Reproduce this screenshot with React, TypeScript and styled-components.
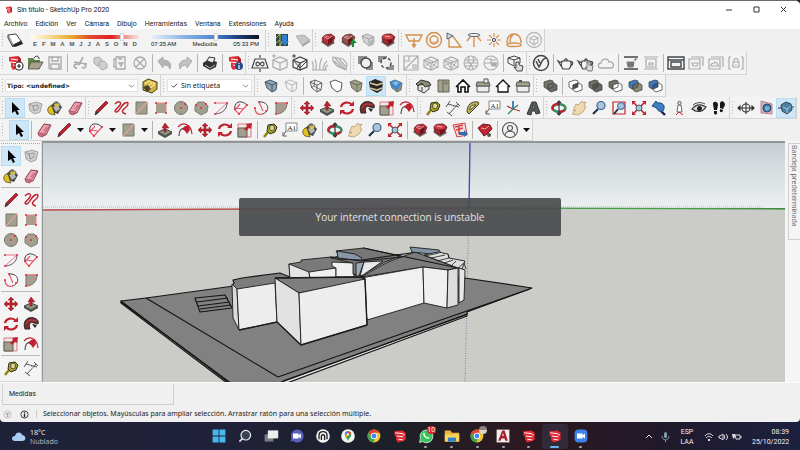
import React from "react";
import styled, { createGlobalStyle, css } from "styled-components";

const GlobalStyle = createGlobalStyle`
  *, *::before, *::after { box-sizing: border-box; }
  body { margin: 0; background: #1d1e2b; font-family: "Open Sans", "Noto Sans", sans-serif; }
  button, input, select { font: inherit; color: inherit; margin: 0; padding: 0; border: 0; background: none; }
`;

const RED = "#bf222e";
const TAUPE = "#a19f8e";
const DARK = "#43474a";
const GREY = "#ababab";
const ORANGE = "#d4924f";

const dot = (x: number, y: number) => <circle key={`${x}-${y}`} cx={x} cy={y} r="1" fill="#e0283a" stroke="none" />;
const cube = (stroke: string, fill: string, width = 1) => (
  <g fill={fill} stroke={stroke} strokeWidth={width} strokeLinejoin="round">
    <path d="M4 6l5-2 7 3-1 7-4 2-5-4z" />
    <path d="M4 6l7 3 5-2M11 9v7" fill="none" />
  </g>
);
const box = (stroke: string) => (
  <path d="M3 7l7-3 7 3v7l-7 3-7-3zM3 7l7 3 7-3M10 10v7" fill="none" stroke={stroke} strokeWidth="1.2" />
);
const solids = (a: string, b: string, overlap: string) => (
  <g stroke={DARK} strokeWidth=".8">
    <path d="M4 6l6-2 3 1v6l-6 2-3-2z" fill={a} />
    <path d="M8 9l6-2 3 2v5l-6 2-3-2z" fill={b} />
    <path d="M8 9l5-2v4l-5 2z" fill={overlap} />
  </g>
);
const sketchup = (
  <>
    <path d="M4 4l9-1 3 3v8l-8 3-2-3V9L4 8z" fill="#e0323a" />
    <path d="M6 6l7 1M6 9l7 1M8 12l5 1" stroke="#fff" strokeWidth="1" fill="none" />
    <path d="M13 3l3 3v8l-3 1z" fill="#a81d27" />
  </>
);
const gem = (fill: string) => (
  <g>
    <path d="M3 12l7 5 7-4-3-3H5z" fill="#6d6b62" />
    <path d="M4 8l3-3 6-1 4 3-2 5-5 3-5-3z" fill={fill} stroke="#5b2023" strokeWidth=".7" />
    <path d="M10 9l5-2-1 5-4 3z" fill="#6f151c" />
    <path d="M6 7l4 2 4-3M7 6l4 1" stroke="#e8a9a9" fill="none" strokeWidth=".9" />
  </g>
);
const teapot = (c: string) => (
  <path d="M6 8h8c2 3 1 6-1 8H7C5 14 5 11 6 8zM6 10L2 8l3 5M14 9c3-2 4 3 0 4M8 8c0-2 4-2 4 0M10 5v1" fill="none" stroke={c} strokeWidth="1.2" />
);

const drawings: Record<string, React.ReactNode> = {
  shadow: (
    <>
      <path d="M6 15l4 2 8-3-2-4z" fill="#222" />
      <path d="M3 5l8-1 5 7-8 4z" fill="#fff" stroke="#444" />
      <path d="M3 5v3l5 9v-2" fill="#ccc" stroke="#444" />
    </>
  ),
  newFile: (
    <>
      {sketchup}
      <circle cx="14" cy="13" r="4" fill="#fff" stroke="#333" strokeWidth="1.2" />
      <path d="M14 11v4M12 13h4" stroke="#222" strokeWidth="1.2" />
    </>
  ),
  open: (
    <>
      <path d="M3 5h5l2 2h5v9H3z" fill="#5f8446" />
      <path d="M6 9h12l-4 7H3z" fill="#a8a28c" stroke="#4b4a42" strokeWidth=".8" />
      <path d="M9 5c2-3 5-2 5 1" stroke="#222" fill="none" />
    </>
  ),
  save: <path d="M4 4h12v12H5l-1-1zM7 4v4h6V4M6 16v-5h8v5" fill="none" stroke={GREY} strokeWidth="1.4" />,
  cut: <path d="M13 4l-4 8M4 9l13 2M8 12a2 2 0 10-1 3M14 11a2 2 0 11-2 3" fill="none" stroke={GREY} strokeWidth="1.7" />,
  copy: (
    <g fill="#cfcfcf" stroke={GREY}>
      <path d="M4 5l5-1 3 3v5l-5 1-3-3z" />
      <path d="M9 9l5-1 3 3v4l-5 2-3-3z" />
    </g>
  ),
  paste: <path d="M6 4h9v12H6zM6 6H4v8h2M9 4v2h3M9 10h4l-2 3z" fill="none" stroke={GREY} strokeWidth="1.3" />,
  remove: <path d="M10 4a6 6 0 100 12 6 6 0 000-12M6 6l8 8M14 6l-8 8" fill="none" stroke={GREY} strokeWidth="1.4" />,
  undo: <path d="M3 8l5-4v3c6 0 9 3 7 9-1-3-3-4-7-4v3z" fill="#b5b5b5" stroke={GREY} />,
  redo: <path d="M17 8l-5-4v3c-6 0-9 3-7 9 1-3 3-4 7-4v3z" fill="#c2c2c2" stroke={GREY} />,
  print: (
    <>
      <path d="M3 10l6-4 8 3-1 5-6 3-7-4z" fill="#333" />
      <path d="M7 8l2-4 6 1-2 5z" fill="#eee" stroke="#333" />
      <path d="M5 12l5 3 5-3" stroke="#bbb" fill="none" />
    </>
  ),
  modelInfo: (
    <>
      {sketchup}
      <circle cx="14" cy="13" r="4" fill="#244c84" />
      <path d="M14 10v1M14 12v4" stroke="#fff" strokeWidth="1.2" />
    </>
  ),
  infinitePlane: (
    <g fill="none" stroke={DARK} strokeWidth="1.2">
      <path d="M2 15l3-9h10l3 9zM10 2v3M10 16v3" />
      <path d="M10 11c-2-3-4-2-4 0s2 3 4 0 4-2 4 0-2 3-4 0" />
    </g>
  ),
  boxLight: (
    <>
      {box(GREY)}
      <path d="M4 1v4M2 3h4" stroke={GREY} />
    </>
  ),
  boxDark: (
    <>
      {box(DARK)}
      <path d="M4 8l6 7M10 10l-3 5M10 15l7-7M4 1v4M2 3h4" stroke={DARK} />
    </>
  ),
  fur: <path d="M3 17c1-4 0-6-1-9M6 17c1-5 0-8-1-11M10 17c-1-6 1-10 2-12M13 17c0-4 1-6 4-9M15 17c0-2 1-4 3-5M2 17h15" fill="none" stroke={GREY} strokeWidth="1.1" />,
  clipper: <path d="M3 4l10 2 4 5-1 6-9-4-4-5zM5 5l10 11M9 6l7 8M4 8l8 7" fill="none" stroke={GREY} strokeWidth="1.2" />,
  sphereSquares: (
    <>
      <path d="M2 3h9v8H2zM10 9h7v8h-7z" fill="#8f8f8f" />
      <circle cx="10" cy="10" r="5" fill="#efefef" stroke={DARK} strokeWidth="1.4" />
    </>
  ),
  squaresDash: (
    <>
      <path d="M2 3h9v6H2zM11 12h7v5h-7z" fill="#8f8f8f" />
      <circle cx="10" cy="10" r="5" fill="#efefef" stroke={DARK} strokeWidth="1.4" strokeDasharray="3 2" />
    </>
  ),
  uvSquare: <path d="M3 3h14v14H3zM3 17L17 3M3 3h5v5H3zM12 12h3v3h-3z" fill="none" stroke={GREY} strokeWidth="1.2" />,
  uvBox: (
    <>
      {box(GREY)}
      <path d="M4 8l6 7M10 10l6 4M4 13l5-3M11 15l5-7M6 6l7 3" stroke={GREY} />
    </>
  ),
  uvSphere: (
    <g fill="none" stroke={GREY} strokeWidth="1.1">
      <circle cx="10" cy="10" r="7" />
      <path d="M4 7h12M3 10h14M4 13h12M8 4l-1 4 3 3-2 5M12 4l1 4-3 3 2 5" />
    </g>
  ),
  uvSphereHalf: (
    <g fill="none" stroke={GREY} strokeWidth="1.1">
      <circle cx="10" cy="10" r="7" />
      <path d="M3 10h14M5 6h5v4M15 7H9" />
      <path d="M10 10h5v3h-4z" fill={GREY} />
    </g>
  ),
  boxHand: (
    <>
      <path d="M2 5l6-2 6 2v5l-6 3-6-3zM2 5l6 2 6-2M8 7v5" fill="none" stroke={DARK} />
      <path d="M10 9v6l-2-1 3 4h5l1-5-4-1V9z" fill="#ddd" stroke={DARK} />
    </>
  ),
  vray: (
    <g fill="none" stroke={DARK} strokeWidth="1.5">
      <circle cx="10" cy="10" r="7.5" />
      <path d="M5 8l3 6c2-2 2-8 7-9M7 6l2 4" />
    </g>
  ),
  teapot: teapot(DARK),
  teapotHand: (
    <>
      {teapot(DARK)}
      <path d="M11 9v6l-2-1 3 4h4l1-5-4-1V9z" fill="#ddd" stroke="#777" />
    </>
  ),
  cloud: <path d="M5 15c-4 0-3-5 0-5 1-5 7-5 8-1 5-1 6 6 2 6z" fill="none" stroke={GREY} strokeWidth="1.3" />,
  teapotBar: (
    <>
      <path d="M3 4h14M3 16h14" stroke={DARK} strokeWidth="1.3" />
      <path d="M6 9h7l-1 5H7zM13 7h2v-2" fill="#777" stroke="#777" />
    </>
  ),
  frameBar: <path d="M3 4h14M3 16h14M5 6h10v8H5zM8 10h4v2H8z" fill="none" stroke={GREY} strokeWidth="1.2" />,
  frame: <path d="M2 4h16v12H2zM2 7h16M5 9h10v5H5z" fill="none" stroke={DARK} strokeWidth="1.4" />,
  framesPot: <path d="M5 4h12v9M3 6h11v10H3zM6 10h6l-1 3H7z" fill="none" stroke={GREY} strokeWidth="1.2" />,
  framesCloud: <path d="M5 4h12v10M3 6h11v10H3zM5 13c0-2 1-3 3-3 2-2 4 0 4 3z" fill="none" stroke={GREY} strokeWidth="1.2" />,
  lock: <path d="M5 4H3v12h2M15 4h2v12h-2M7 9h6v5H7zM8 9V7c0-2 4-2 4 0v2M10 11v1" fill="none" stroke={GREY} strokeWidth="1.2" />,
  map: (
    <>
      <path d="M4 4h12v12H4z" fill="#2b4d40" />
      <path d="M4 8l4-4v12l4-8M4 13l4-3" stroke="#c4ad52" fill="none" />
      <path d="M10 5h5v6h2l-4 5-4-5h1z" fill="#2d80d2" />
    </>
  ),
  terrain: (
    <>
      <path d="M4 6l8-1 6 5-8 5z" fill="#c6c6c6" stroke="#b0b0b0" />
      <path d="M10 15l8-5v2l-8 5z" fill="#a2a2a2" />
    </>
  ),
  gem: gem("#bd2b38"),
  gemUp: (
    <>
      {gem("#8f564a")}
      <path d="M14 17v-4h-2l3-4 4 4h-3v4z" fill="#1a8b35" />
    </>
  ),
  gemGrey: (
    <>
      {cube("#a5a5a5", "#d2d2d2")}
      <path d="M12 11l3-2 2 2-2 4-3 1z" fill="#b5b5b5" />
    </>
  ),
  gemDown: (
    <>
      {gem("#a52834")}
      <ellipse cx="10" cy="7" rx="6" ry="3" fill="#d13f49" stroke="#641218" strokeWidth=".7" />
      <path d="M7 6l5 1" stroke="#f3b9b9" />
    </>
  ),
  rectLight: <path d="M2 5h16l-3 6H5zM10 8v8M8 14l2 3 2-3" fill="none" stroke={ORANGE} strokeWidth="1.4" />,
  sphereLight: (
    <g fill="none" stroke={ORANGE} strokeWidth="1.5">
      <circle cx="10" cy="10" r="7.5" />
      <circle cx="10" cy="10" r="4" />
      <path d="M7 11c2 2 5 2 7-1" strokeWidth="1" />
    </g>
  ),
  spotLight: (
    <>
      <path d="M5 7v10h12L8 5" fill="none" stroke={ORANGE} strokeWidth="1.4" />
      <path d="M3 3l6 3-6 3z" fill="#d8dde0" stroke="#57656c" />
    </>
  ),
  iesLight: (
    <>
      <path d="M7 6l-4 5M13 6l4 5M10 7v10" stroke={ORANGE} strokeWidth="1.4" />
      <ellipse cx="10" cy="5" rx="6" ry="1.5" fill="none" stroke="#57656c" />
    </>
  ),
  omniLight: (
    <>
      <path d="M10 3v4M10 13v4M3 10h4M13 10h4M5 5l3 3M12 12l3 3M15 5l-3 3M8 12l-3 3" stroke={ORANGE} strokeWidth="1.2" />
      <circle cx="10" cy="10" r="1.6" fill="none" stroke="#445" />
    </>
  ),
  domeLight: <path d="M3 13C2 1 18 1 17 13M10 13c3 0 7 0 7 2s-14 2-14 0 3-2 7-2M6 12c0-4 1-6 3-7" fill="none" stroke={ORANGE} strokeWidth="1.5" />,
  meshLight: (
    <g fill="none" stroke="#bababa" strokeWidth="1.3">
      <circle cx="10" cy="10" r="7.5" />
      <path d="M6 8l4-2 4 2v4l-4 3-4-3zM6 8l4 2 4-2M10 10v5" />
    </g>
  ),
  bucket: (
    <>
      <path d="M6 7l6-3 5 5-4 7-6-2z" fill="#45494a" />
      <path d="M8 9l5-2 2 4-4 3z" fill="#b5b7b2" />
      <path d="M9 6l5-1 1 3-5 1z" fill="#d8bd4b" />
      <path d="M5 8C2 10 2 14 5 16l5 1-1-3-2-6z" fill="#e0be24" stroke="#4a4011" strokeWidth=".7" />
      <path d="M8 6c2-4 7-2 7 2" fill="none" stroke="#555" />
    </>
  ),
  tagPaint: (
    <>
      <path d="M3 6l5-3 9 3v7l-5 4-9-3z" fill="#cfae43" stroke="#4f3f15" />
      <path d="M5 8l4-3 6 3M7 10l5-3M9 13l6-5" stroke="#fae792" fill="none" strokeWidth="1.3" />
      <path d="M3 11l5-2 3 4-4 3z" fill="#4b442c" />
    </>
  ),
  eraser: (
    <>
      <path d="M4 13l6-9 7 1-5 10-6 1z" fill="#ef9daa" stroke="#804451" />
      <path d="M4 13l6 1-1 3-4-1zM10 14l6-9M10 11l3-4" fill="#cc7180" stroke="#a55362" strokeWidth=".8" />
    </>
  ),
  cursor: <path d="M7 4v11l3-2 2 4 2-1-2-4h3z" fill="#050505" />,
  component: (
    <>
      <path d="M4 6l7-2 6 2-2 8-5 2-5-3z" fill="#cfcfcf" stroke="#a4a4a4" />
      <path d="M8 8l5-1v4l-4 2zM4 6l4 2 1 5" fill="none" stroke="#999" />
    </>
  ),
  pencil: (
    <>
      <path d="M5 13L15 3l2 2L7 15l-3 2z" fill={RED} stroke="#702128" strokeWidth=".8" />
      <path d="M5 13l2 2-3 2z" fill="#24453b" />
    </>
  ),
  freehand: <path d="M4 6c3-4 7-2 5 1s-7 6-4 7 5-7 9-9 4 2 0 5-3 5 1 6" fill="none" stroke={RED} strokeWidth="1.4" />,
  rect: (
    <>
      <path d="M5 4h11v12H5z" fill={TAUPE} stroke="#777465" />
      <path d="M5 16L16 4" stroke="#dda49b" strokeWidth="1.2" />
    </>
  ),
  rectRot: (
    <>
      <path d="M5 5h10v10H5z" fill={TAUPE} />
      <path d="M5 5h10v10M5 8h4l6 7" stroke="#e6888b" fill="none" />
      {dot(5, 5)}{dot(15, 5)}{dot(15, 15)}{dot(5, 15)}
    </>
  ),
  circle: (
    <>
      <circle cx="10" cy="10" r="6.5" fill={TAUPE} stroke="#77756b" />
      <path d="M10 10l4-4" stroke="#e88" />
      {dot(10, 10)}{dot(14, 6)}
    </>
  ),
  polygon: (
    <>
      <path d="M7 4h6l4 4-1 6-6 3-6-4V8z" fill={TAUPE} stroke="#827f75" />
      <path d="M10 10l4-4" stroke="#e88" />
      {dot(10, 10)}{dot(15, 6)}{dot(5, 7)}
    </>
  ),
  arc: (
    <>
      <path d="M16 5c0 6-4 10-11 11" fill="none" stroke="#555" />
      <path d="M4 5h12L4 16" fill="none" stroke="#e6798a" />
      {dot(4, 5)}{dot(16, 5)}{dot(4, 16)}
    </>
  ),
  arc2: (
    <>
      <path d="M4 12C2 4 10 1 16 7" fill="none" stroke="#444" />
      <path d="M4 12l4 4 8-9M4 10l8 1M4 12l5-6" fill="none" stroke="#e6596a" strokeWidth="1.2" />
      {dot(4, 11)}{dot(8, 16)}{dot(16, 7)}
    </>
  ),
  arc3: (
    <>
      <path d="M8 4c10-1 12 10 3 12" fill="none" stroke="#444" />
      <path d="M8 4l4 9M4 10c0 6 4 7 8 6" fill="none" stroke="#e6596a" strokeWidth="1.2" />
      {dot(8, 4)}{dot(4, 10)}{dot(15, 13)}
    </>
  ),
  pie: (
    <>
      <path d="M5 5h11c0 6-4 11-11 11z" fill={TAUPE} stroke="#77756b" />
      <path d="M5 16L16 5H5" fill="none" stroke="#e6888b" />
      {dot(5, 5)}{dot(16, 5)}{dot(5, 16)}
    </>
  ),
  move: (
    <path d="M10 3l3 3h-2v3h3V7l3 3-3 3v-2h-3v3h2l-3 3-3-3h2v-3H6v2l-3-3 3-3v2h3V6H7z" fill={RED} stroke="#8d1520" strokeWidth=".5" />
  ),
  pushPull: (
    <>
      <path d="M3 12l7-3 7 3-7 4z" fill="#8b927e" stroke="#444" />
      <path d="M3 12v2l7 4 7-4v-2l-7 4z" fill="#47534a" />
      <path d="M9 12V8H7l3-5 4 5h-3v4z" fill={RED} stroke="#7c1720" strokeWidth=".5" />
    </>
  ),
  rotate: (
    <g fill="none" stroke={RED} strokeWidth="2.2">
      <path d="M4 9c1-5 8-6 11-2M16 11c-1 5-8 6-11 2" />
      <path d="M17 3v5h-5zM3 17v-5h5z" fill={RED} stroke="none" />
    </g>
  ),
  followMe: (
    <>
      <path d="M4 15C1 7 7 2 13 4c4 1 5 4 4 6l-4-1c-3-2-6 1-4 6z" fill="#7b2a30" stroke="#27282a" />
      <path d="M5 10c2-4 5-5 10-3" stroke="#c44" fill="none" />
      <path d="M11 10l5 1-2 3z" fill="#222" />
    </>
  ),
  scale: (
    <>
      <path d="M3 4h13v13H3z" fill="#f3e6e6" stroke="#d77880" />
      <path d="M3 8h9v9H3z" fill={TAUPE} stroke="#5f5e55" />
      <path d="M9 9l3-3-1-2 6-1-1 6-2-1-3 3z" fill={RED} />
    </>
  ),
  offset: (
    <>
      <path d="M3 7c5-6 13-3 14 7" fill="none" stroke={RED} strokeWidth="1.2" />
      <path d="M4 16c0-5 2-8 6-8" fill="none" stroke="#444" strokeWidth="1.2" />
      <path d="M7 9l3-3 4-1 1 5-3 4-2-3z" fill={RED} />
    </>
  ),
  tape: (
    <>
      <path d="M4 17l4-5" stroke="#8d8614" strokeWidth="2.6" />
      <path d="M8 5l6-1 3 3-2 5-5 2-3-3z" fill="#aaa62b" stroke="#303018" />
      <ellipse cx="12" cy="8" rx="2.5" ry="3" fill="#ddd69a" stroke="#555220" />
    </>
  ),
  dimension: (
    <g fill="none" stroke="#555" strokeWidth="1">
      <path d="M5 6l11 3M6 16L15 6M3 9l4-6M4 14l5 4M13 4l4 4" />
      <path d="M9 7l3 3" stroke="#aaa" />
    </g>
  ),
  protractor: <path d="M4 14C4 7 8 3 15 4l1 2L6 16zM7 12c0-4 2-5 6-5z" fill="#bab05b" stroke="#474522" fillRule="evenodd" />,
  text: (
    <>
      <path d="M6 3h11v8H6z" fill="#fff" stroke="#888" />
      <path d="M3 16l3-5M3 12v4h4" stroke="#666" fill="none" />
      <text x="7.5" y="9.5" fontSize="7" fontFamily="Liberation Serif, serif" fill="#222">A1</text>
    </>
  ),
  axes: (
    <>
      <path d="M10 3v8" stroke="#2b63b8" strokeWidth="1.6" />
      <path d="M10 11l7 2M4 8l6 3" stroke="#b63b42" strokeWidth="1.3" />
      <path d="M10 11l-5 5M10 11l5-4" stroke="#2e8c5b" strokeWidth="1.3" />
    </>
  ),
  text3d: <path d="M4 16L9 4h4l4 11-4 1-1-3H9l-1 4zM10 7l-1 3h3z" fill="#565a58" stroke="#353837" fillRule="evenodd" />,
  orbit: (
    <>
      <ellipse cx="10" cy="10" rx="6.5" ry="3.7" fill="none" stroke="#378d62" strokeWidth="2.5" />
      <path d="M4 12C2 7 6 6 10 6M10 14c3 0 5-1 6-2" fill="none" stroke={RED} strokeWidth="2.3" />
      <path d="M10 3v14M8 5l2-2 2 2M8 15l2 2 2-2" fill="none" stroke="#333" strokeWidth="1.2" />
    </>
  ),
  hand: <path d="M4 13l3-7 2 1 4-4 1 2 3-1-2 4 2 1-3 5-5 3-6-1 4-4z" fill="#efd9b0" stroke="#b59a6e" strokeWidth=".8" />,
  zoom: (
    <>
      <path d="M4 16l5-5" stroke="#22344c" strokeWidth="2.2" />
      <circle cx="12" cy="7.5" r="4" fill="#a9c3dd" stroke="#3f628c" strokeWidth="1.2" />
    </>
  ),
  zoomWindow: (
    <>
      <path d="M4 4h12v12H4z" fill="none" stroke={RED} strokeWidth="1.2" />
      <path d="M5 16l4-5" stroke="#22344c" strokeWidth="2" />
      <circle cx="12" cy="8" r="3.5" fill="#a9c3dd" stroke="#3f628c" />
    </>
  ),
  zoomExtents: (
    <>
      <path d="M4 4l4 4M16 4l-4 4M4 16l4-4M16 16l-4-4" stroke={RED} strokeWidth="1.6" />
      <path d="M3 3h4L3 7zM17 3h-4l4 4zM3 17h4l-4-4zM17 17h-4l4-4z" fill={RED} />
      <circle cx="10" cy="10" r="3" fill="#a5c5d0" stroke="#3d5e6d" />
    </>
  ),
  previous: (
    <>
      <path d="M12 13l4 4" stroke="#16263c" strokeWidth="2.4" />
      <path d="M3 8l4-5 1 2c6-1 9 3 6 8-3 1-6 0-6-3z" fill="#3f80c4" stroke="#204a78" />
    </>
  ),
  camera: (
    <>
      <path d="M9 7h3l1 7h-5z" fill="#fff" stroke="#666" />
      <circle cx="10.5" cy="5" r="1.7" fill="#ddd" stroke="#666" />
      <path d="M7 17l3-3 4 3" fill="none" stroke={RED} />
    </>
  ),
  eye: (
    <>
      <path d="M3 11c4-5 9-5 14-2-3 5-9 6-14 2z" fill="#ddd" stroke="#333" strokeWidth="1.2" />
      <circle cx="10.5" cy="10.5" r="2.5" fill="#222" />
      <path d="M4 7c4-3 8-3 12-1" fill="none" stroke="#444" />
    </>
  ),
  walk: <path d="M4 6c0-3 5-3 5 1l-1 5H5zM5 13h3v2c0 2-3 2-3 0zM11 5c1-3 5-2 5 2l-2 4-3-1zM11 11l3 1c0 3-4 3-3 0z" fill="#181818" />,
  section: (
    <g fill="none" stroke="#333" strokeWidth="1.1">
      <circle cx="10" cy="10" r="4" />
      <path d="M2 10h16M10 4v12M2 10l2-2v4zM18 10l-2-2v4z" />
    </g>
  ),
  sectionPlane: (
    <>
      <path d="M5 3l11 3v10L5 15z" fill="#d6adbb" stroke="#b087a0" />
      <circle cx="11" cy="10" r="4" fill="#3c78a8" stroke="#264b6d" />
      <path d="M9 9l3-1 2 2-2 3-3-1z" fill="#77aed4" />
    </>
  ),
  sectionCut: (
    <>
      <path d="M5 7l5-3 5 2 1 6-5 4-5-3z" fill="#4d80a8" stroke="#3a444c" />
      <path d="M7 9l4 2 4-3M11 11v4" stroke="#a5cbe4" fill="none" />
      <path d="M2 10h3M16 9h2" stroke="#333" />
    </>
  ),
  cubeBlue: cube("#4a5963", "#8ea4b6"),
  cubeGhost: cube("#a5a5a5", "#f3f3f3", 0.8),
  cubeWire: (
    <>
      {cube("#555", "none", 0.9)}
      <path d="M9 4l-1 6-3 2M8 10l7 4" stroke="#555" strokeWidth=".8" fill="none" />
    </>
  ),
  cubeHidden: <path d="M4 6l5-2 7 3-1 7-4 2-5-4z" fill="#fff" stroke="#555" />,
  cubeShaded: cube("#6e6d60", "#a19f89"),
  cubeTextured: (
    <>
      <path d="M3 6l6-3 8 3-1 8-5 3-7-4z" fill="#28241f" />
      <path d="M4 7l7 2 6-2M4 12l7 2 5-2" stroke="#cdbd9b" strokeWidth="1.8" fill="none" />
    </>
  ),
  cubeMono: (
    <>
      {cube("#66786f", "#918f7c")}
      <path d="M4 6l5-2 7 3-5 7-6-4z" fill="#3c86cf" />
      <path d="M6 7l4-2 3 2-3 3z" fill="#86b8e4" />
    </>
  ),
  iso: (
    <>
      <path d="M5 9v5l6 3 5-4V8z" fill="#e8e6de" stroke="#333" />
      <path d="M3 8l5-4 8 2 2 3-6 2-3-4-4 3z" fill="#8c8b77" stroke="#333" />
      <path d="M9 15v-4" stroke="#333" />
    </>
  ),
  top: (
    <>
      <path d="M5 4h11v12H5z" fill="#a3a18a" stroke="#66655a" />
      <path d="M10 4v12M12 6h2v2h-2z" stroke="#66655a" fill="#eee" />
    </>
  ),
  front: <path d="M3 11l7-7 7 7M5 10v6h3v-5h4v5h3v-6" fill="#fff" stroke="#111" strokeWidth="1.6" />,
  right: (
    <>
      <path d="M4 10h12v6H4z" fill="#eee" stroke="#555" />
      <path d="M3 10l1-4h12l1 4z" fill="#a3a18a" stroke="#555" />
      <path d="M11 3h4v4h-4z" fill="#eee" stroke="#555" />
    </>
  ),
  back: <path d="M3 11l7-7 7 7M5 10v6h10v-6" fill="#fff" stroke="#111" strokeWidth="1.3" />,
  left: (
    <>
      <path d="M4 10h12v6H4z" fill="#eee" stroke="#555" />
      <path d="M3 10l1-4h12l1 4z" fill="#a3a18a" stroke="#555" />
      <path d="M6 5h3" stroke="#555" strokeWidth="2" />
    </>
  ),
  outerShell: solids("#777568", "#6b695d", "#716f62"),
  intersect: solids("#fff", "#fff", "#4e4e48"),
  union: solids("#716f62", "#67655b", "#55544c"),
  subtract: solids("#716f62", "#fff", "#fff"),
  trim: solids("#3c79bb", "#8e8a76", "#726f60"),
  split: solids("#3c79bb", "#fff", "#285a92"),
  layout: (
    <>
      <path d="M3 5l12-2 2 12-10 2z" fill="#f0dddd" stroke="#d73e47" />
      <path d="M5 7l8-2M6 10l7-2M9 7v7" stroke="#d73e47" strokeWidth="1.6" />
      <path d="M9 12h5v-2l4 4-4 3v-2H9z" fill="#2a70b8" />
    </>
  ),
  gemGear: (
    <>
      <path d="M3 8l5-4 7 1 2 4-5 5-3 2z" fill="#bd2430" stroke="#701820" />
      <path d="M6 8l4 1 4-3" stroke="#eeaaaa" fill="none" />
      <circle cx="14" cy="15" r="2" fill="#555" />
    </>
  ),
  user: (
    <g fill="none" stroke="#555" strokeWidth="1.1">
      <circle cx="10" cy="10" r="7.5" />
      <circle cx="10" cy="8" r="2.5" />
      <path d="M5 15c1-5 9-5 10 0" />
    </g>
  ),
  sketchup,
};

const Glyph = styled.svg<{ $size?: number }>`
  display: block;
  flex: none;
  width: ${(p) => p.$size ?? 20}px;
  height: ${(p) => p.$size ?? 20}px;
`;

const Icon = ({ name, size }: { name: string; size?: number }) => (
  <Glyph viewBox="0 0 20 20" $size={size} aria-hidden="true">{drawings[name]}</Glyph>
);

const Page = styled.div`
  display: flex;
  flex-direction: column;
  min-height: 100vh;
  color: #222;
  font-size: 7px;
  line-height: 10px;
`;
const AppWindow = styled.div`
  flex: 1;
  display: flex;
  flex-direction: column;
  background: #f0f0f0;
  border-top: 1px solid #6e6a6d;
  border-radius: 0 5px 4px 4px;
  overflow: hidden;
`;
const TitleBar = styled.header`
  display: flex;
  align-items: center;
  height: 17px;
  padding-left: 4px;
  gap: 3px;
  background: #fff;
`;
const Title = styled.h1`
  flex: 1;
  margin: 0;
  font: 400 7px/10px Roboto, sans-serif;
`;
const CaptionButtons = styled.div`
  display: flex;
  padding-right: 3px;
`;
const CaptionButton = styled.button`
  display: grid;
  place-items: center;
  width: 27px;
  height: 16px;
`;
const MenuBar = styled.nav`
  display: flex;
  gap: 8px;
  height: 11px;
  padding-left: 4px;
  background: #fff;
  font-family: Roboto, sans-serif;
`;
const MenuButton = styled.button`
  line-height: 10px;
`;
const ToolRow = styled.div<{ $height: number }>`
  display: flex;
  height: ${(p) => p.$height}px;
`;
const Bar = styled.div<{ $boundary?: number }>`
  display: flex;
  align-items: center;
  border-right: 1px solid #d2d2d2;
  border-bottom: 1px solid #d6d6d6;
  background: #f3f3f3;
  &::before {
    content: "";
    align-self: stretch;
    width: ${(p) => (p.$boundary ?? 7) - 1}px;
    margin: 3px 0;
    background: radial-gradient(circle, #b5b5b5 0 1px, transparent 1px) 1px 0 / 3px 3px repeat-y;
  }
`;
const active = css`
  background: #cde6f8;
  box-shadow: inset 0 0 0 1px #b9dcf5;
`;
const ToolButton = styled.button<{ $active?: boolean }>`
  display: grid;
  place-items: center;
  flex: none;
  width: 20px;
  height: 20px;
  ${(p) => p.$active && active}
`;
const ArrowButton = styled.button`
  display: grid;
  place-items: center;
  width: 12px;
  height: 16px;
`;
const Separator = styled.span`
  flex: none;
  width: 1px;
  height: 18px;
  margin: 0 2px;
  background: #b4b4b4;
`;
const Scale = styled.div`
  display: flex;
  flex-direction: column;
  width: 108px;
  margin: 0 6px;
`;
const ScaleLabels = styled.div`
  display: flex;
  justify-content: space-between;
  padding: 0 2px;
  font: 700 6px/7px "Liberation Sans", Arial, sans-serif;
  color: #555;
`;
const TimeLabels = styled(ScaleLabels)`
  padding: 0;
  font-weight: 400;
  color: #111;
`;
const Slider = styled.input<{ $track: string }>`
  appearance: none;
  display: block;
  width: 100%;
  height: 8px;
  background: linear-gradient(${(p) => p.$track}) center / 100% 4px no-repeat;
  &::-webkit-slider-thumb {
    appearance: none;
    width: 4px;
    height: 8px;
    border: 1px solid #d5d5d5;
    background: #fff;
  }
`;
const SelectBox = styled.div<{ $width: number }>`
  display: grid;
  grid-template-columns: 1fr 9px;
  align-items: center;
  width: ${(p) => p.$width}px;
  height: 13px;
  margin-right: 2px;
  background: #fff;
  border: 1px solid #e2e2e2;
`;
const Select = styled.select<{ $bold?: boolean }>`
  appearance: none;
  grid-area: 1 / 1 / 2 / 3;
  height: 11px;
  padding: 0 12px 0 ${(p) => (p.$bold ? 1 : 13)}px;
  font: ${(p) => (p.$bold ? "700 6px/11px 'DejaVu Sans'" : "400 7px/11px 'Noto Sans'")}, sans-serif;
`;
const SelectMark = styled.svg<{ $start?: boolean }>`
  grid-area: ${(p) => (p.$start ? "1 / 1" : "1 / 2")};
  width: 7px;
  height: 7px;
  margin-left: ${(p) => (p.$start ? 3 : 0)}px;
  pointer-events: none;
`;
const Workspace = styled.main`
  position: relative;
  flex: 1;
  display: flex;
  min-height: 240px;
`;
const Palette = styled.aside`
  flex: none;
  width: 42px;
  padding: 2px 1px 0;
  background: #f4f4f4;
  border-right: 1px solid #e1e1e1;
  border-bottom: 1px solid #d6d6d6;
`;
const PaletteGroup = styled.div`
  display: grid;
  grid-template-columns: 20px 20px;
  padding: 2px 0 1px;
  border-top: 1px solid #b9b9b9;
  &:first-child { border-top: 1px dotted #aaa; }
`;
const Viewport = styled.section`
  flex: 1;
  min-width: 0;
  display: flex;
  border-top: 2px solid #929597;
  border-left: 1px solid #929597;
  background: #cbccc8;
`;
const Scene = styled.svg`
  flex: 1;
  width: 100%;
  height: 100%;
  min-width: 0;
`;
const Tray = styled.aside`
  flex: none;
  width: 15px;
  padding: 2px 0 0 3px;
  background: #f5f5f5;
`;
const TrayTab = styled.button`
  width: 12px;
  height: 97px;
  padding: 1px 2px 2px 0;
  border: 1px solid #cfcfcf;
  border-right: 0;
  writing-mode: vertical-rl;
  text-align: left;
  color: #666;
  font: 400 7px/8px "Open Sans", sans-serif;
`;
const Toast = styled.div`
  position: absolute;
  top: 57px;
  left: 50%;
  width: 322px;
  transform: translateX(-50%);
  padding: 12px 0;
  border-radius: 2px;
  background: rgba(74, 75, 77, 0.92);
  color: #e4e4e4;
  font: 400 10px/14px "Open Sans", sans-serif;
  text-align: center;
`;
const MeasureRow = styled.div`
  display: flex;
  height: 25px;
  padding: 1px 0 2px 2px;
  border-top: 1px solid #fafafa;
`;
const MeasureBox = styled.div`
  display: flex;
  align-items: center;
  gap: 6px;
  width: 172px;
  padding-left: 6px;
  border: 1px solid #cfcfcf;
  border-left: 1px dotted #bbb;
  border-top: 0;
  font-family: Roboto, sans-serif;
`;
const MeasureInput = styled.input`
  flex: 1;
  min-width: 0;
`;
const StatusBar = styled.footer`
  display: flex;
  align-items: center;
  gap: 8px;
  height: 15px;
  padding: 0 0 1px 3px;
`;
const StatusText = styled.span`
  margin-left: -1px;
  padding-left: 6px;
  border-left: 1px solid #ccc;
  font-family: "Noto Sans", sans-serif;
  line-height: 8px;
`;
const Taskbar = styled.footer`
  display: grid;
  grid-template-columns: 1fr 387px 1fr;
  align-items: center;
  height: 29px;
  background: linear-gradient(90deg, #1f2138, #20213a 28%, #1c2028 48%, #2d1820 66%, #21192a 82%, #1c2040);
  color: #f0f0f4;
`;
const Weather = styled.button`
  display: flex;
  align-items: center;
  gap: 4px;
  padding-left: 11px;
  text-align: left;
  line-height: 9px;
`;
const WeatherState = styled.span`
  display: block;
  color: #b9bac8;
`;
const Apps = styled.div`
  display: grid;
  grid-template-columns: repeat(15, 1fr);
`;
const AppButton = styled.button<{ $state?: "open" | "current" }>`
  display: flex;
  flex-direction: column;
  align-items: center;
  gap: 2px;
  height: 25px;
  padding-top: 4px;
  border-radius: 3px;
  background: ${(p) => (p.$state === "current" ? "#322a38" : "none")};
  &::after {
    content: "";
    width: ${(p) => (p.$state === "current" ? 9 : p.$state ? 3 : 0)}px;
    height: 2px;
    border-radius: 1px;
    background: ${(p) => (p.$state === "current" ? "#65b5e8" : "#a3a1a8")};
  }
`;
const BadgeHost = styled.span`
  position: relative;
  display: block;
`;
const Badge = styled.span`
  position: absolute;
  top: -2px;
  right: -2px;
  width: 9px;
  border-radius: 5px;
  background: #d92632;
  font: 400 7px/8px Roboto, sans-serif;
  text-align: center;
`;
const Avatar = styled.span`
  position: absolute;
  top: -2px;
  right: -2px;
  width: 8px;
  height: 8px;
  border-radius: 50%;
  background: linear-gradient(#8c8480 50%, #ddd5cc 50%);
`;
const SystemTray = styled.div`
  display: flex;
  align-items: center;
  justify-content: flex-end;
  gap: 5px;
  padding-right: 11px;
`;
const TrayText = styled.button<{ $align: "center" | "right"; $width: number }>`
  width: ${(p) => p.$width}px;
  text-align: ${(p) => p.$align};
  font: 400 7px/10px Roboto, sans-serif;
`;
const TrayIcons = styled.button<{ $gap: number }>`
  display: flex;
  gap: ${(p) => p.$gap}px;
  margin: 0 5px;
`;

/* Entries: "icon|Label", "icon|Label|on", "-" for a separator and "v" for a drop arrow. */
const Tools = ({ items }: { items: string[] }) => (
  <>
    {items.map((item, i) => {
      if (item === "-") return <Separator key={i} />;
      if (item === "v")
        return (
          <ArrowButton key={i} aria-label="Más opciones">
            <svg width="7" height="4" viewBox="0 0 7 4"><path d="M0 0h7L3.5 4z" fill="#111" /></svg>
          </ArrowButton>
        );
      const [icon, label, on] = item.split("|");
      return (
        <ToolButton key={i} aria-label={label} aria-pressed={on === "on"} $active={on === "on"}>
          <Icon name={icon} />
        </ToolButton>
      );
    })}
  </>
);

const Chevron = () => (
  <SelectMark viewBox="0 0 8 8" aria-hidden="true"><path d="M1 3l3 3 3-3" fill="none" stroke="#777" /></SelectMark>
);

const principal = ["cursor|Seleccionar|on", "component|Crear componente", "bucket|Pintar", "eraser|Borrar"];
const drawing = ["pencil|Línea", "freehand|A mano alzada", "rect|Rectángulo", "rectRot|Rectángulo girado", "circle|Círculo", "polygon|Polígono", "arc|Arco", "arc2|Arco de 2 puntos", "arc3|Arco de 3 puntos", "pie|Sector"];
const editingBar = ["move|Mover", "pushPull|Empujar/tirar", "rotate|Rotar", "followMe|Sígueme", "scale|Escala", "offset|Equidistancia"];

const Building = () => (
  <Scene viewBox="43 143 742 239" preserveAspectRatio="xMinYMin slice" role="img" aria-label="Modelo 3D">
    <defs>
      <linearGradient id="sky" x1="0" y1="0" x2="0" y2="1">
        <stop offset="0" stopColor="#c7ced2" />
        <stop offset=".75" stopColor="#e3e8ea" />
        <stop offset="1" stopColor="#eceff0" />
      </linearGradient>
    </defs>
    <rect x="43" y="142" width="3000" height="67" fill="url(#sky)" />
    <rect x="43" y="209" width="3000" height="1000" fill="#cbccc8" />
    <path d="M43 207h372M469 207h293" stroke="#a5a2a2" strokeWidth=".8" strokeDasharray="1 1" />
    <path d="M43 210l426-2" stroke="#bc4e50" strokeWidth="1.3" />
    <path d="M469 208l316 1h2000" stroke="#45a145" strokeWidth="1.3" />
    <path d="M470 142l-1 66" stroke="#3f45b5" strokeWidth="1.3" />
    <path d="M469 208l-4 174" stroke="#7f82a8" strokeDasharray="1 1.5" />
    <g stroke="#161616" strokeWidth="1.2" strokeLinejoin="round">
      <path d="M121 301v2l106 80h4zM467 313v3l-180 67h-9v-5z" fill="#e6e6e6" />
      <path d="M121 301l25-3 88-12 231-8 67 10-65 24v2l-188 69h-50z" fill="#818181" />
      <path d="M146 298l132 79 252-88M466 315l-183 66M121 302l111 82" fill="none" />
      <path d="M195 298l30-3 7 13-32 4zM197 302l31-4M198 306l32-4M200 309l31-4" fill="none" />
      <path d="M233 280l9-2 38-5 10 4h30l-45 7-38 6-5-4 2-3z" fill="#7d7d7d" />
    </g>
    <g stroke="#1c1c1c" strokeWidth=".9" strokeLinejoin="round">
      <path d="M232 284l5 5 2 41-6-12z" fill="#dadada" />
      <path d="M237 289l38-6 2 39-38 8z" fill="#ededed" />
      <path d="M289 264l12-2v-2l30-3 24 3v17h-65z" fill="#7a7a7a" />
      <path d="M289 264l20 8 1 8h-20z" fill="#e4e4e4" />
      <path d="M309 272l27-4v10h-26z" fill="#f0f0f0" />
      <path d="M332 262l22 1v14h-18v-9l-4-2z" fill="#f0f0f0" />
      <path d="M336 251l28-3 36 8-15 6-24 14-8-2v-11l-22-5 8-2z" fill="#777" />
      <path d="M337 251l18 3 7 4-1 2-23-1z" fill="#8797a8" />
      <path d="M356 263l8-1-5 14h-3z" fill="#9aa8b7" />
      <path d="M364 262l19-1-20 14-3 1z" fill="#e6e9ec" />
      <path d="M361 277l27-15 27-10 43 16-10 2-25-3z" fill="#7c7c7c" />
      <path d="M330 257l32 4 40-4M363 248l95 20M362 260l62-9" fill="none" strokeWidth="1.2" />
      <path d="M410 247l29 3 3 5-30-3z" fill="#8495a7" />
      <path d="M424 255l14-3 10 2 1 4 16 3-3 8-4-1z" fill="#dedede" />
      <g fill="none" strokeWidth=".8">
        <path d="M425 256l14-3M431 258l14-3M437 261l12-3M444 263l9-3M451 266l5-5M458 268l6-5 2 6M448 254l1 4" />
      </g>
      <path d="M361 278l62-11 1 36-57 17z" fill="#f1f1f1" />
      <path d="M423 267l25 3-1 38-23-5z" fill="#f0f0f0" />
      <path d="M448 270l10-2v37l-11 3z" fill="#ddd" />
      <path d="M459 268l6 2-1 30-5 3z" fill="#e8e8e8" />
      <path d="M275 278l89-1 1 3-66 13z" fill="#7e7e7e" />
      <path d="M275 278l24 15 2 52-24-23z" fill="#e2e2e2" />
      <path d="M299 293l66-14 2 46-66 20z" fill="#ededed" />
      <path d="M275 278l86-1 4 2 2 46-66 20-24-23-38 8" fill="none" strokeWidth="1.4" />
    </g>
  </Scene>
);

const appArt: Record<string, React.ReactNode> = {
  windows: <path d="M2 2h7.500v7.500H2zM10.500 2H18v7.500h-7.500zM2 10.500h7.500V18H2zM10.500 10.500H18V18h-7.500z" fill="#46b8ec" />,
  search: <><path d="M8 12l-5 5" stroke="#ddd" strokeWidth="2" /><circle cx="11" cy="9" r="6" fill="#3a4355" stroke="#eee" strokeWidth="1.5" /></>,
  tasks: <><path d="M2 8h11v9H2z" fill="#777b82" /><path d="M6 3h13v10H6z" fill="#eee" /></>,
  chat: <><path d="M10 2a8 8 0 11-5 14l-3 1 1-4A8 8 0 0110 2z" fill="#5b5fc0" /><path d="M5 7h7v6H5zM12 9l3-2v6l-3-2z" fill="#fff" /></>,
  arch: <><circle cx="10" cy="10" r="8.5" fill="#f4f4f4" /><path d="M5 14V9c0-6 10-6 10 0v5M8 15v-5c0-2 4-2 4 0v5" fill="none" stroke="#222" strokeWidth="1.7" /></>,
  maps: <><circle cx="10" cy="10" r="8.5" fill="#f5f5f5" /><path d="M10 17c0-4-4-5-4-9a4 4 0 018 0c0 4-4 5-4 9z" fill="#31a653" /><path d="M6 8c0-3 2-4 4-4v4z" fill="#4285f4" /><path d="M10 4c2 0 4 1 4 4h-4z" fill="#ea4335" /><path d="M6 8h4l-2 4z" fill="#fbbc04" /><circle cx="10" cy="8" r="1.4" fill="#fff" /></>,
  chrome: <><circle cx="10" cy="10" r="8" fill="#f5c32c" /><path d="M3 6a8 8 0 0114 0h-7l-3 5z" fill="#de4436" /><path d="M3 6l4 6 4 2-2 4A8 8 0 013 6z" fill="#36a453" /><circle cx="10" cy="10" r="4" fill="#fff" /><circle cx="10" cy="10" r="3" fill="#4285f4" /></>,
  sketch: <><path d="M3 4l10-1 4 3v9l-9 3-3-3v-4L3 9z" fill="#e22832" /><path d="M4 6l9 1 3 2M6 10l8 1M8 14l6 1" stroke="#fff" strokeWidth="1.2" fill="none" /></>,
  whatsapp: <><path d="M2 18l1-5a8 8 0 113 4z" fill="#36c45b" stroke="#eee" /><path d="M7 6c-2 3 3 9 7 7l-1-2-2 1-3-4 1-1z" fill="#fff" /></>,
  folder: <><path d="M1 3h7l2 3h9v11H1z" fill="#e8b93d" /><path d="M1 8h18v9H1z" fill="#f7d35d" /><path d="M5 12h10v5H5z" fill="#2f80d0" /></>,
  autocad: <><path d="M2 2h16v16H2z" fill="#f2eeee" /><path d="M4 16L9 3h3l4 13h-3l-1-3H8l-1 3zM9 10h2l-1-4z" fill="#a51f2c" fillRule="evenodd" /></>,
  zoomApp: <><rect x="2" y="2" width="16" height="16" rx="5" fill="#3f82ee" /><path d="M5 7h7v6H5zM12 9l3-2v6l-3-2z" fill="#fff" /></>,
};

const apps: { glyph: string; label: string; state?: "open" | "current"; badge?: string; avatar?: boolean }[] = [
  { glyph: "windows", label: "Inicio" },
  { glyph: "search", label: "Buscar" },
  { glyph: "tasks", label: "Vista de tareas" },
  { glyph: "chat", label: "Chat" },
  { glyph: "arch", label: "Biblioteca" },
  { glyph: "maps", label: "Mapas" },
  { glyph: "chrome", label: "Chrome" },
  { glyph: "sketch", label: "SketchUp" },
  { glyph: "whatsapp", label: "WhatsApp", state: "open", badge: "10" },
  { glyph: "folder", label: "Explorador", state: "open" },
  { glyph: "chrome", label: "Chrome, perfil", state: "open", avatar: true },
  { glyph: "autocad", label: "AutoCAD", state: "open" },
  { glyph: "sketch", label: "SketchUp, modelo", state: "open" },
  { glyph: "sketch", label: "SketchUp, Sin título", state: "current" },
  { glyph: "zoomApp", label: "Zoom", state: "open" },
];

export default function App() {
  return (
    <Page>
      <GlobalStyle />
      <AppWindow>
        <TitleBar>
          <Icon name="sketchup" size={10} />
          <Title>Sin título - SketchUp Pro 2020</Title>
          <CaptionButtons>
            <CaptionButton aria-label="Minimizar"><svg width="7" height="7"><path d="M0 4h6" stroke="#333" /></svg></CaptionButton>
            <CaptionButton aria-label="Maximizar"><svg width="7" height="7"><path d="M1 1h5v5H1z" fill="none" stroke="#333" /></svg></CaptionButton>
            <CaptionButton aria-label="Cerrar"><svg width="7" height="7"><path d="M1 1l5 5M6 1L1 6" stroke="#333" /></svg></CaptionButton>
          </CaptionButtons>
        </TitleBar>
        <MenuBar aria-label="Menú">
          {["Archivo", "Edición", "Ver", "Cámara", "Dibujo", "Herramientas", "Ventana", "Extensiones", "Ayuda"].map((m) => (
            <MenuButton key={m}>{m}</MenuButton>
          ))}
        </MenuBar>

        <ToolRow $height={23}>
          <Bar $boundary={6}>
            <Tools items={["shadow|Sombras"]} />
            <Scale>
              <Slider type="range" aria-label="Fecha" defaultValue={86} $track="90deg, #fffdf0, #f6d98a 18%, #e9a72a 38%, #dd4a2c 55%, #e02020 75%, #f08e86 86%, #f4e6e4" />
              <ScaleLabels>{[..."EFMAMJJASOND"].map((m, i) => <span key={i}>{m}</span>)}</ScaleLabels>
            </Scale>
            <Scale>
              <Slider type="range" aria-label="Hora" defaultValue={61} $track="90deg, #e8f0fa, #8db4e2 30%, #4f86cf 58%, #2f5cae 70%, #172b57 88%, #0b1020" />
              <TimeLabels><span>07:35 AM</span><span>Mediodía</span><span>05:33 PM</span></TimeLabels>
            </Scale>
          </Bar>
          <Bar><Tools items={["map|Añadir ubicación", "terrain|Mostrar terreno"]} /></Bar>
          <Bar $boundary={6}><Tools items={["gem|3D Warehouse", "gemUp|Compartir modelo", "gemGrey|Compartir componente", "gemDown|Extension Warehouse"]} /></Bar>
          <Bar $boundary={6}><Tools items={["rectLight|Luz rectangular", "sphereLight|Luz esférica", "spotLight|Foco", "iesLight|Luz IES", "omniLight|Luz omni", "domeLight|Luz de cúpula", "meshLight|Luz de malla"]} /></Bar>
        </ToolRow>

        <ToolRow $height={23}>
          <Bar $boundary={6}>
            <Tools items={["newFile|Nuevo", "open|Abrir", "save|Guardar", "-", "cut|Cortar", "copy|Copiar", "paste|Pegar", "remove|Eliminar", "-", "undo|Deshacer", "redo|Rehacer", "-", "print|Imprimir", "-", "modelInfo|Información del modelo"]} />
          </Bar>
          <Bar $boundary={5}><Tools items={["infinitePlane|Plano infinito", "boxLight|Exportar proxy", "boxDark|Importar proxy", "fur|Pelo", "clipper|Recortador"]} /></Bar>
          <Bar $boundary={6}>
            <Tools items={["sphereSquares|Proyección esférica", "squaresDash|Proyección", "-", "uvSquare|UV plano", "uvBox|UV triplanar", "uvBox|UV ajustado", "uvSphere|UV esfera", "uvSphereHalf|UV media esfera", "-", "boxHand|Seleccionar objeto"]} />
          </Bar>
          <Bar $boundary={5}>
            <Tools items={["vray|Editor de recursos", "-", "teapot|Render", "teapotHand|Render interactivo", "cloud|Render en la nube", "-", "teapotBar|Render en vista", "frameBar|Región", "-", "frame|Búfer de imagen", "framesPot|Render por lotes", "framesCloud|Lotes en la nube", "lock|Bloquear cámara"]} />
          </Bar>
        </ToolRow>

        <ToolRow $height={22}>
          <Bar $boundary={6}>
            <SelectBox $width={133}>
              <Select aria-label="Tipo" $bold><option>Tipo: &lt;undefined&gt;</option></Select>
              <Chevron />
            </SelectBox>
            <Tools items={["tagPaint|Clasificador"]} />
          </Bar>
          <Bar>
            <SelectBox $width={85}>
              <Select aria-label="Etiqueta"><option>Sin etiqueta</option></Select>
              <SelectMark $start viewBox="0 0 8 8" aria-hidden="true"><path d="M1 4l2 2 4-4" fill="none" stroke="#222" /></SelectMark>
              <Chevron />
            </SelectBox>
          </Bar>
          <Bar><Tools items={["cubeBlue|Rayos X", "cubeGhost|Bordes posteriores", "-", "cubeWire|Alambre", "cubeHidden|Líneas ocultas", "cubeShaded|Sombreado", "cubeTextured|Sombreado con texturas|on", "cubeMono|Monocromo"]} /></Bar>
          <Bar><Tools items={["iso|Isométrica", "top|Planta", "front|Frente", "right|Derecha", "back|Atrás", "left|Izquierda"]} /></Bar>
          <Bar><Tools items={["outerShell|Carcasa exterior", "-", "intersect|Intersecar", "union|Unir", "subtract|Sustraer", "trim|Recortar", "split|Dividir"]} /></Bar>
        </ToolRow>

        <ToolRow $height={22}>
          <Bar $boundary={6}><Tools items={principal} /></Bar>
          <Bar $boundary={6}><Tools items={drawing} /></Bar>
          <Bar $boundary={6}><Tools items={editingBar} /></Bar>
          <Bar $boundary={6}><Tools items={["tape|Medir", "dimension|Acotación", "protractor|Transportador", "text|Texto", "axes|Ejes", "text3d|Texto 3D"]} /></Bar>
          <Bar $boundary={6}>
            <Tools items={["orbit|Orbitar", "hand|Desplazar", "zoom|Zoom", "zoomWindow|Ventana de zoom", "zoomExtents|Ver modelo centrado", "previous|Anterior", "camera|Situar cámara", "eye|Girar", "walk|Caminar"]} />
          </Bar>
          <Bar $boundary={7}><Tools items={["section|Plano de sección", "sectionPlane|Mostrar planos", "sectionCut|Mostrar cortes|on"]} /></Bar>
        </ToolRow>

        <ToolRow $height={22}>
          <Bar $boundary={10}>
            <Tools items={["cursor|Seleccionar|on", "-", "eraser|Borrar", "pencil|Línea", "v", "arc2|Arco", "v", "rect|Rectángulo", "v", "-", "pushPull|Empujar/tirar", "offset|Equidistancia", "move|Mover", "rotate|Rotar", "scale|Escala", "-", "tape|Medir", "text|Texto", "bucket|Pintar", "-", "orbit|Orbitar", "hand|Desplazar", "zoom|Zoom", "zoomExtents|Ver modelo centrado", "-", "gem|3D Warehouse", "gemDown|Extension Warehouse", "layout|Enviar a LayOut", "-", "gemGear|Administrador de extensiones", "-", "user|Cuenta", "v"]} />
          </Bar>
        </ToolRow>

        <Workspace>
          <Palette>
            <PaletteGroup><Tools items={principal} /></PaletteGroup>
            <PaletteGroup><Tools items={drawing} /></PaletteGroup>
            <PaletteGroup><Tools items={["move|Mover", "pushPull|Empujar/tirar", "rotate|Rotar", "followMe|Sígueme", "scale|Escala", "offset|Equidistancia"]} /></PaletteGroup>
            <PaletteGroup><Tools items={["tape|Medir", "dimension|Acotación"]} /></PaletteGroup>
          </Palette>
          <Viewport><Building /></Viewport>
          <Tray><TrayTab>Bandeja predeterminada</TrayTab></Tray>
          <Toast role="status">Your internet connection is unstable</Toast>
        </Workspace>

        <MeasureRow>
          <MeasureBox>
            <label htmlFor="medidas">Medidas</label>
            <MeasureInput id="medidas" />
          </MeasureBox>
        </MeasureRow>
        <StatusBar>
          <svg width="9" height="9" viewBox="0 0 10 10" aria-hidden="true"><circle cx="5" cy="5" r="4" fill="none" stroke="#bbb" /><path d="M3 4h4M5 3v5" stroke="#aaa" strokeWidth="1.5" /></svg>
          <svg width="9" height="9" viewBox="0 0 10 10" aria-hidden="true"><circle cx="5" cy="5" r="4" fill="none" stroke="#333" /><path d="M5 2v1M5 4v4" stroke="#222" strokeWidth="1.5" /></svg>
          <StatusText>Seleccionar objetos. Mayúsculas para ampliar selección. Arrastrar ratón para una selección múltiple.</StatusText>
        </StatusBar>
      </AppWindow>

      <Taskbar>
        <Weather>
          <svg width="15" height="11" viewBox="0 0 15 11" aria-hidden="true"><path d="M4 10C0 10 0 5 4 5c1-5 7-4 7-1 4 0 5 6 0 6z" fill="#a9cdf2" /></svg>
          <span>18°C<WeatherState>Nublado</WeatherState></span>
        </Weather>
        <Apps>
          {apps.map((a) => (
            <AppButton key={a.label} aria-label={a.label} $state={a.state}>
              <BadgeHost>
                <Glyph viewBox="0 0 20 20" $size={16} aria-hidden="true">{appArt[a.glyph]}</Glyph>
                {a.badge && <Badge>{a.badge}</Badge>}
                {a.avatar && <Avatar />}
              </BadgeHost>
            </AppButton>
          ))}
        </Apps>
        <SystemTray>
          <TrayIcons $gap={7} aria-label="Iconos ocultos">
            <svg width="9" height="11" viewBox="0 0 9 11"><path d="M1 7l3-3 3 3" fill="none" stroke="#ddd" /></svg>
            <svg width="9" height="11" viewBox="0 0 9 11"><rect x="3" y="1" width="3" height="6" rx="1.5" fill="#7e99a8" /><path d="M1 5c0 5 7 5 7 0M4.5 9v2" fill="none" stroke="#7e99a8" /></svg>
          </TrayIcons>
          <TrayText $align="center" $width={14}>ESP LAA</TrayText>
          <TrayIcons $gap={4} aria-label="Red, volumen y batería">
            <svg width="10" height="10" viewBox="0 0 10 10"><path d="M1 4c2-3 6-3 8 0M2 6c2-2 4-2 6 0M4 8l1-1 1 1-1 1z" fill="none" stroke="#ddd" /></svg>
            <svg width="10" height="10" viewBox="0 0 10 10"><path d="M1 4h1l3-2v6L2 6H1zM6 3c1 1 1 3 0 4M8 2c2 2 2 4 0 6" fill="none" stroke="#ddd" /></svg>
            <svg width="10" height="10" viewBox="0 0 10 10"><path d="M3 3h5v4H4zM9 4v2" fill="none" stroke="#ddd" /><path d="M0 2h3v3L1 7z" fill="#ddd" /></svg>
          </TrayIcons>
          <TrayText $align="right" $width={37}>08:39 25/10/2022</TrayText>
        </SystemTray>
      </Taskbar>
    </Page>
  );
}
